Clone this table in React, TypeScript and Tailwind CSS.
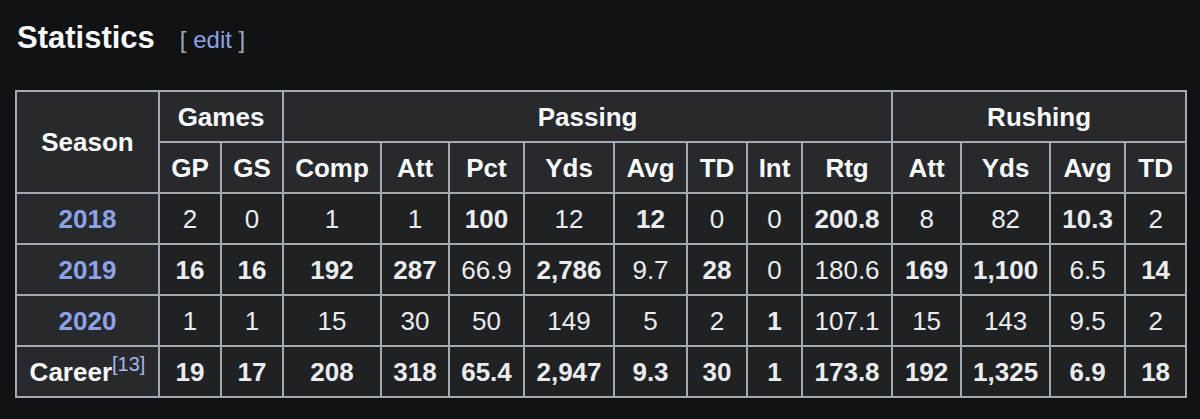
import React from 'react';

type Cell = { v: string; b?: boolean };

const c = (v: string, b = false): Cell => ({ v, b });

const rows: { season: string; link: boolean; ref?: string; cells: Cell[] }[] = [
  {
    season: '2018',
    link: true,
    cells: [c('2'), c('0'), c('1'), c('1'), c('100', true), c('12'), c('12', true), c('0'), c('0'), c('200.8', true), c('8'), c('82'), c('10.3', true), c('2')],
  },
  {
    season: '2019',
    link: true,
    cells: [c('16', true), c('16', true), c('192', true), c('287', true), c('66.9'), c('2,786', true), c('9.7'), c('28', true), c('0'), c('180.6'), c('169', true), c('1,100', true), c('6.5'), c('14', true)],
  },
  {
    season: '2020',
    link: true,
    cells: [c('1'), c('1'), c('15'), c('30'), c('50'), c('149'), c('5'), c('2'), c('1', true), c('107.1'), c('15'), c('143'), c('9.5'), c('2')],
  },
  {
    season: 'Career',
    link: false,
    ref: '[13]',
    cells: ['19', '17', '208', '318', '65.4', '2,947', '9.3', '30', '1', '173.8', '192', '1,325', '6.9', '18'].map((v) => c(v, true)),
  },
];

const subHeads = ['GP', 'GS', 'Comp', 'Att', 'Pct', 'Yds', 'Avg', 'TD', 'Int', 'Rtg', 'Att', 'Yds', 'Avg', 'TD'];

const th = 'border-2 border-[#a2a9b1] bg-[#27292d] text-[#f8f9fa] font-bold text-center px-0';
const td = 'border-2 border-[#a2a9b1] bg-[#202122] text-[#eaecf0] text-center px-0';

const App: React.FC = () => {
  return (
    <div className="w-[1200px] h-[419px] bg-[#111214] overflow-hidden px-[15px] font-['Liberation_Sans',Arial,sans-serif]">
      <div className="flex items-baseline pt-[18px] pl-[2px] h-[58px] leading-[40px]">
        <h2 className="text-[31px] font-bold text-[#f8f9fa]">Statistics</h2>
        <span className="ml-[25px] text-[24px] text-[#a2a9b1]">
          [ <a className="text-[#8ea3e6]">edit</a> ]
        </span>
      </div>
      <table className="table-fixed border-collapse w-[1170px] mt-[32px] text-[26px] leading-[30px]">
        <colgroup>
          <col className="w-[143px]" />
          <col className="w-[62px]" />
          <col className="w-[62px]" />
          <col className="w-[98px]" />
          <col className="w-[68px]" />
          <col className="w-[75px]" />
          <col className="w-[90px]" />
          <col className="w-[73px]" />
          <col className="w-[60px]" />
          <col className="w-[55px]" />
          <col className="w-[90px]" />
          <col className="w-[69px]" />
          <col className="w-[89px]" />
          <col className="w-[75px]" />
          <col className="w-[61px]" />
        </colgroup>
        <thead>
          <tr className="h-[51px]">
            <th rowSpan={2} className={th}>Season</th>
            <th colSpan={2} className={th}>Games</th>
            <th colSpan={8} className={th}>Passing</th>
            <th colSpan={4} className={th}>Rushing</th>
          </tr>
          <tr className="h-[51px]">
            {subHeads.map((h, i) => (
              <th key={i} className={th}>{h}</th>
            ))}
          </tr>
        </thead>
        <tbody>
          {rows.map((r) => (
            <tr key={r.season} className="h-[51px]">
              <th className={th}>
                {r.link ? <a className="text-[#8ea3e6]">{r.season}</a> : r.season}
                {r.ref && <sup className="text-[20px] font-normal text-[#a7b6ea]">{r.ref}</sup>}
              </th>
              {r.cells.map((cell, i) => (
                <td key={i} className={`${td} ${cell.b ? 'font-bold' : 'font-normal'}`}>{cell.v}</td>
              ))}
            </tr>
          ))}
        </tbody>
      </table>
    </div>
  );
};

export default App;
